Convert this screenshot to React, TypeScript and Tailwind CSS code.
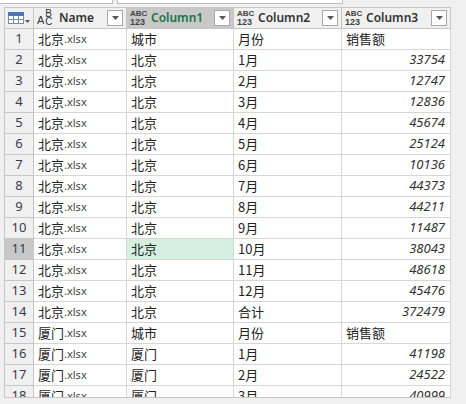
import React from 'react'

const cjk = '"Noto Sans CJK SC", "Noto Sans", sans-serif'

type Row = { name: string; city: string; month: string; value: string; header?: boolean }

const bj = [33754, 12747, 12836, 45674, 25124, 10136, 44373, 44211, 11487, 38043, 48618, 45476]

const rows: Row[] = [
  { name: '北京', city: '城市', month: '月份', value: '销售额', header: true },
  ...bj.map((v, i) => ({ name: '北京', city: '北京', month: `${i + 1}月`, value: String(v) })),
  { name: '北京', city: '北京', month: '合计', value: '372479' },
  { name: '厦门', city: '城市', month: '月份', value: '销售额', header: true },
  { name: '厦门', city: '厦门', month: '1月', value: '41198' },
  { name: '厦门', city: '厦门', month: '2月', value: '24522' },
  { name: '厦门', city: '厦门', month: '3月', value: '40999' },
]

const Dropdown = () => (
  <span className="ml-auto flex h-[16px] w-[16px] items-center justify-center border border-[#a9a9a9] bg-white">
    <svg width="7" height="4" viewBox="0 0 7 4">
      <path d="M0 0h7L3.5 4z" fill="#555" />
    </svg>
  </span>
)

const AnyType = () => (
  <span className="flex w-[17px] flex-col text-[8px] font-bold leading-[8px] text-[#444]" style={{ fontFamily: '"Liberation Sans", sans-serif' }}>
    <span>ABC</span>
    <span className="text-[9px] leading-[9px]">123</span>
  </span>
)

const TextType = () => (
  <span className="flex w-[20px] items-center text-[#333]" style={{ fontFamily: '"Liberation Sans", sans-serif' }}>
    <span className="mt-[5px] text-[11px] leading-[11px]">A</span>
    <span className="ml-[1px] flex flex-col text-[10px] leading-[8px]">
      <span>B</span>
      <span>C</span>
    </span>
  </span>
)

const TableIcon = () => (
  <svg width="22" height="12" viewBox="0 0 22 12">
    <rect x="0.5" y="0.5" width="15" height="11" fill="#fff" stroke="#7a8aa8" />
    <rect x="0.5" y="0.5" width="15" height="3" fill="#4f74b3" stroke="#4f74b3" />
    <path d="M0.5 7.5h15M5.5 3.5v8M10.5 3.5v8" stroke="#7a8aa8" />
    <path d="M17 8h5l-2.5 3z" fill="#555" />
  </svg>
)

const headCell = 'flex h-[21px] items-center border-r border-b border-[#c6c6c6] px-[3px]'
const cell = 'flex h-[21px] items-center border-r border-b border-[#d6d6d6] px-[4px] text-[13px] text-[#222]'

export default function App() {
  return (
    <div className="relative h-[404px] w-[466px] overflow-hidden bg-[#f0f0f0]" style={{ fontFamily: cjk }}>
      <div className="flex h-[4px]">
        <div className="w-[113px] border-b border-r border-[#bdbdbd] bg-white" />
        <div className="ml-[4px] w-[226px] border-b border-l border-r border-[#bdbdbd] bg-white" />
      </div>
      <div className="ml-[4px] mt-[3px] h-[391px] w-[447px] overflow-hidden border-l border-t border-b border-[#c6c6c6] bg-white">
        <div className="grid grid-cols-[29px_93px_107px_108px_109px]">
          <div className={`${headCell} justify-center bg-[#f0f0f0]`}>
            <TableIcon />
          </div>
          <div className={`${headCell} bg-[#f0f0f0]`}>
            <TextType />
            <span className="ml-[2px] text-[12px] font-semibold text-[#333]" style={{ fontFamily: '"Noto Sans", sans-serif' }}>
              Name
            </span>
            <Dropdown />
          </div>
          <div className={`${headCell} bg-[#c8c8c8]`}>
            <AnyType />
            <span className="ml-[4px] text-[12px] font-semibold text-[#217346]" style={{ fontFamily: '"Noto Sans", sans-serif' }}>
              Column1
            </span>
            <Dropdown />
          </div>
          <div className={`${headCell} bg-[#f0f0f0]`}>
            <AnyType />
            <span className="ml-[4px] text-[12px] font-semibold text-[#333]" style={{ fontFamily: '"Noto Sans", sans-serif' }}>
              Column2
            </span>
            <Dropdown />
          </div>
          <div className={`${headCell} bg-[#f0f0f0]`}>
            <AnyType />
            <span className="ml-[4px] text-[12px] font-semibold text-[#333]" style={{ fontFamily: '"Noto Sans", sans-serif' }}>
              Column3
            </span>
            <Dropdown />
          </div>

          {rows.map((r, i) => {
            const sel = i === 10
            return (
              <React.Fragment key={i}>
                <div
                  className={`flex h-[21px] items-center justify-center border-r border-b border-[#c6c6c6] text-[13px] text-[#3a3a4a] ${
                    sel ? 'bg-[#c8c8c8]' : 'bg-[#f0f0f0]'
                  }`}
                  style={{ fontFamily: '"Noto Sans", sans-serif' }}
                >
                  {i + 1}
                </div>
                <div className={cell}>
                  {r.name}
                  <span className="text-[11px] text-[#444]" style={{ fontFamily: '"Noto Sans", sans-serif' }}>
                    .xlsx
                  </span>
                </div>
                <div className={`${cell} ${sel ? 'bg-[#d5f0e1]' : ''}`}>{r.city}</div>
                <div className={cell}>{r.month}</div>
                {r.header ? (
                  <div className={cell}>{r.value}</div>
                ) : (
                  <div
                    className={`${cell} justify-end pr-[5px] text-[12px] italic text-[#333]`}
                    style={{ fontFamily: '"Noto Sans", sans-serif' }}
                  >
                    {r.value}
                  </div>
                )}
              </React.Fragment>
            )
          })}
        </div>
      </div>
    </div>
  )
}
